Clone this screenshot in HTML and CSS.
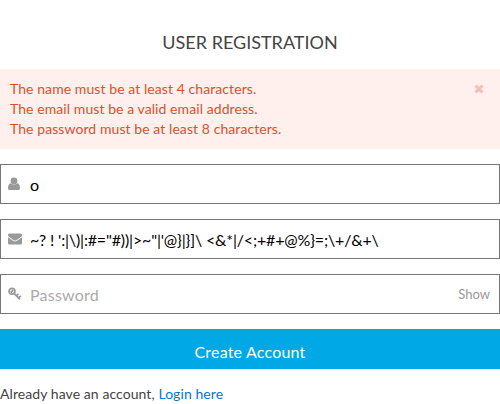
FILE: index.html
```html
<!DOCTYPE html>
<html lang="en"><head><meta charset="utf-8"><title>User Registration</title><link rel="stylesheet" href="styles.css"></head>
<body>
<main class="register">
<h1 class="title">USER REGISTRATION</h1>
<div class="alert">
<ul class="errors"><li>The name must be at least 4 characters.</li><li>The email must be a valid email address.</li><li>The password must be at least 8 characters.</li></ul>
<svg class="close" viewBox="0 0 10 10"><path d="M1.5 1.5 8.500 8.500M8.500 1.500 1.500 8.500" stroke="currentColor" stroke-width="3"/></svg>
</div>
<div class="field"><svg class="icon user" viewBox="0 0 14 14"><circle cx="7" cy="4" r="3.400"/><path d="M3.800 6.300C1.700 6.700 1 8.800 1 11.200 1 12.300 1.800 13 2.800 13h8.400c1 0 1.800-.7 1.800-1.800 0-2.400-.7-4.500-2.800-4.900C8.500 8.200 5.500 8.200 3.800 6.300z"/></svg><span class="value">o</span></div>
<div class="field"><svg class="icon" viewBox="0 0 14 14"><path d="M0 3.200C0 2.200.6 1.500 1.500 1.500h11c.9 0 1.500.6 1.500 1.400 0 1-.7 1.800-1.500 2.400L8.600 8c-1 .8-2.200.8-3.200 0L1.500 5.300C.7 4.700 0 3.900 0 3.200zM0 5.200l5 3.600c1.200.9 2.800.9 4 0l5-3.600v6c0 .8-.6 1.300-1.300 1.300H1.300C.6 12.500 0 12 0 11.200z"/></svg><span class="value email">~? ! ':|\)|:#="#))|&gt;~"|'@}|}]\ &lt;&amp;*|/&lt;;+#+@%}=;\+/&amp;+\</span></div>
<div class="field"><svg class="icon key" viewBox="0 0 14 14"><circle cx="4" cy="4.300" r="2.900"/><path d="M2.800 5.500 5.200 3.100M6 6.300 12 12.300M8.500 8.700 10.500 6.900M10.600 10.900 12.900 8.900"/></svg><span class="value placeholder">Password</span><span class="show">Show</span></div>
<button class="submit">Create Account</button>
<p class="login">Already have an account, <a href="#">Login here</a></p>
</main>
</body></html>
```
FILE: styles.css
```css
* { box-sizing: border-box; }
body { margin: 0; background: #fff; color: #444; font: 14px/20px Lato, sans-serif; letter-spacing: .075px; overflow: hidden; }
.register { display: flex; flex-direction: column; padding-top: 30px; }
.title { margin: 0 0 14px; font-size: 18px; line-height: 25px; font-weight: 400; text-align: center; letter-spacing: 0; }
.alert { display: flex; justify-content: space-between; height: 80px; padding: 10px 16px 10px 10px; margin-bottom: 15px; background: #fff0ee; color: #d85030; }
.errors { list-style: none; margin: 0; padding: 0; }
.close { width: 10px; height: 10px; margin-top: 5px; color: #f5beb5; }
.field { display: flex; align-items: center; height: 40px; margin-bottom: 15px; padding: 0 9px 0 7px; border: 1px solid #777; }
.icon { width: 14px; height: 14px; margin-right: 8px; fill: #999; }
.user { margin-left: -1px; margin-right: 9px; }
.key { fill: none; stroke: #999; stroke-width: 1.8; }
.value { font-size: 16px; color: #000; white-space: pre; padding-top: 1px; }
.value.email { letter-spacing: -.165px; }
.value.placeholder { color: #aaa; letter-spacing: .22px; }
.show { margin-left: auto; font-size: 13px; color: #999; letter-spacing: 0; }
.submit { height: 40px; margin: 0 0 15px; padding: 6px 0 0; border: 0; background: #00a8e6; color: #fff; font: 16px/20px Lato, sans-serif; letter-spacing: .2px; }
.login { margin: 0; }
.login a { color: #07d; text-decoration: none; }
```
